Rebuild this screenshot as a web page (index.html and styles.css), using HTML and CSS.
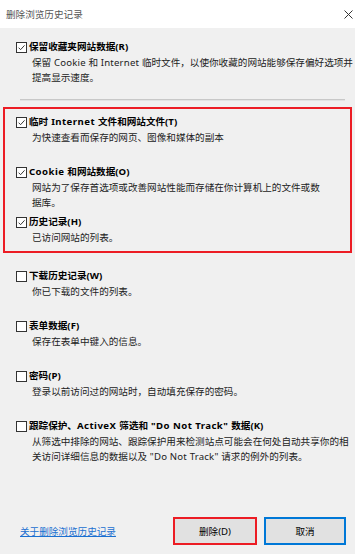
FILE: index.html
```html
<!DOCTYPE html>
<html lang="zh-CN">
<head>
<meta charset="utf-8">
<title>删除浏览历史记录</title>
<link rel="stylesheet" href="styles.css">
</head>
<body>
<div class="window">
  <div class="titlebar">
    <span class="title">删除浏览历史记录</span>
    <svg class="close" width="9" height="9" viewBox="0 0 9 9"><path d="M0.5 0.5 L8.5 8.5 M8.5 0.5 L0.5 8.5" stroke="#333" stroke-width="1" fill="none"/></svg>
  </div>
  <div class="content">
    <div class="item first">
      <div class="label"><span class="cb checked"><svg viewBox="0 0 10 10"><path d="M1.8 5.2 L4 7.4 L8.4 2.6" stroke="#222" stroke-width="1" fill="none"/></svg></span>保留收藏夹网站数据(R)</div>
      <div class="desc">保留<span class="lat"> Cookie </span>和<span class="lat"> Internet </span>临时文件，以使你收藏的网站能够保存偏好选项并<br>提高显示速度。</div>
    </div>
    <div class="sep"></div>
    <div class="highlight">
      <div class="item">
        <div class="label"><span class="cb checked"><svg viewBox="0 0 10 10"><path d="M1.8 5.2 L4 7.4 L8.4 2.6" stroke="#222" stroke-width="1" fill="none"/></svg></span>临时<span class="lat">&nbsp;Internet&nbsp;</span>文件和网站文件(T)</div>
        <div class="desc">为快速查看而保存的网页、图像和媒体的副本</div>
      </div>
      <div class="item">
        <div class="label"><span class="cb checked"><svg viewBox="0 0 10 10"><path d="M1.8 5.2 L4 7.4 L8.4 2.6" stroke="#222" stroke-width="1" fill="none"/></svg></span><span class="lat">Cookie&nbsp;</span>和网站数据(O)</div>
        <div class="desc">网站为了保存首选项或改善网站性能而存储在你计算机上的文件或数<br>据库。</div>
      </div>
      <div class="item last">
        <div class="label"><span class="cb checked"><svg viewBox="0 0 10 10"><path d="M1.8 5.2 L4 7.4 L8.4 2.6" stroke="#222" stroke-width="1" fill="none"/></svg></span>历史记录(H)</div>
        <div class="desc">已访问网站的列表。</div>
      </div>
    </div>
    <div class="list">
      <div class="item">
        <div class="label"><span class="cb"></span>下载历史记录(W)</div>
        <div class="desc">你已下载的文件的列表。</div>
      </div>
      <div class="item">
        <div class="label"><span class="cb"></span>表单数据(F)</div>
        <div class="desc">保存在表单中键入的信息。</div>
      </div>
      <div class="item">
        <div class="label"><span class="cb"></span>密码(P)</div>
        <div class="desc">登录以前访问过的网站时，自动填充保存的密码。</div>
      </div>
      <div class="item">
        <div class="label"><span class="cb"></span>跟踪保护、<span class="lat">ActiveX&nbsp;</span>筛选和<span class="lat">&nbsp;"Do Not Track"&nbsp;</span>数据(K)</div>
        <div class="desc">从筛选中排除的网站、跟踪保护用来检测站点可能会在何处自动共享你的相<br>关访问详细信息的数据以及<span class="lat"> "Do Not Track" </span>请求的例外的列表。</div>
      </div>
    </div>
    <div class="footer">
      <a class="link" href="#">关于删除浏览历史记录</a>
      <div class="buttons">
        <button class="btn btn-delete">删除(D)</button>
        <button class="btn btn-cancel">取消</button>
      </div>
    </div>
  </div>
</div>
</body>
</html>
```
FILE: styles.css
```css
html, body {
  margin: 0;
  padding: 0;
  background: #fff;
}
body {
  font-family: "Noto Sans", "Noto Sans CJK SC", sans-serif;
  font-size: 9.6px;
  color: #000;
}
.window {
  width: 357px;
  height: 554px;
  display: flex;
  flex-direction: column;
  background: #fff;
}
.titlebar {
  height: 28px;
  flex: none;
  display: flex;
  align-items: center;
  justify-content: space-between;
  padding: 0 4px 0 6px;
}
.title {
  color: #555;
  font-size: 9.6px;
}
.close {
  display: block;
}
.content {
  flex: 1;
  background: #f0f0f0;
  margin-right: 2px;
  display: flex;
  flex-direction: column;
}
.item {
  height: 50px;
  box-sizing: border-box;
}
.item.first {
  height: auto;
  margin-top: 12px;
  padding-left: 16px;
}
.item.last {
  height: auto;
}
.label {
  display: flex;
  align-items: center;
  height: 14px;
  line-height: 14px;
  font-weight: bold;
  white-space: pre;
}
.lat {
  letter-spacing: 0.45px;
  white-space: pre;
}
.desc .lat {
  letter-spacing: 0.2px;
}
.cb {
  width: 11px;
  height: 11px;
  box-sizing: border-box;
  border: 1px solid #333;
  background: #fff;
  margin-right: 2px;
  flex: none;
  display: flex;
  align-items: center;
  justify-content: center;
}
.cb svg {
  width: 9px;
  height: 9px;
}
.desc {
  margin-top: 1px;
  padding-left: 16px;
  line-height: 15px;
  color: #222;
  white-space: nowrap;
}
.sep {
  height: 1px;
  background: #c8c8c8;
  border-bottom: 1px solid #e2e2e2;
  margin: 14px 10px 6px 20px;
}
.highlight {
  margin: 0 3px;
  border: 2px solid #ec1c24;
  padding: 6px 0 6px 11px;
}
.list {
  padding: 16px 0 0 16px;
}
.footer {
  margin-top: auto;
  display: flex;
  align-items: center;
  justify-content: space-between;
  padding: 0 9px 9px 20px;
}
.link {
  color: #1a6fd0;
  text-decoration: underline;
  font-size: 9.6px;
}
.buttons {
  display: flex;
  gap: 7px;
}
.btn {
  height: 28px;
  box-sizing: border-box;
  background: #e1e1e1;
  font-family: "Noto Sans", "Noto Sans CJK SC", sans-serif;
  font-size: 9.6px;
  color: #000;
  padding: 0;
}
.btn-delete {
  width: 84px;
  border: 2px solid #ec1c24;
}
.btn-cancel {
  width: 82px;
  border: 2px solid #0078d7;
}
```
